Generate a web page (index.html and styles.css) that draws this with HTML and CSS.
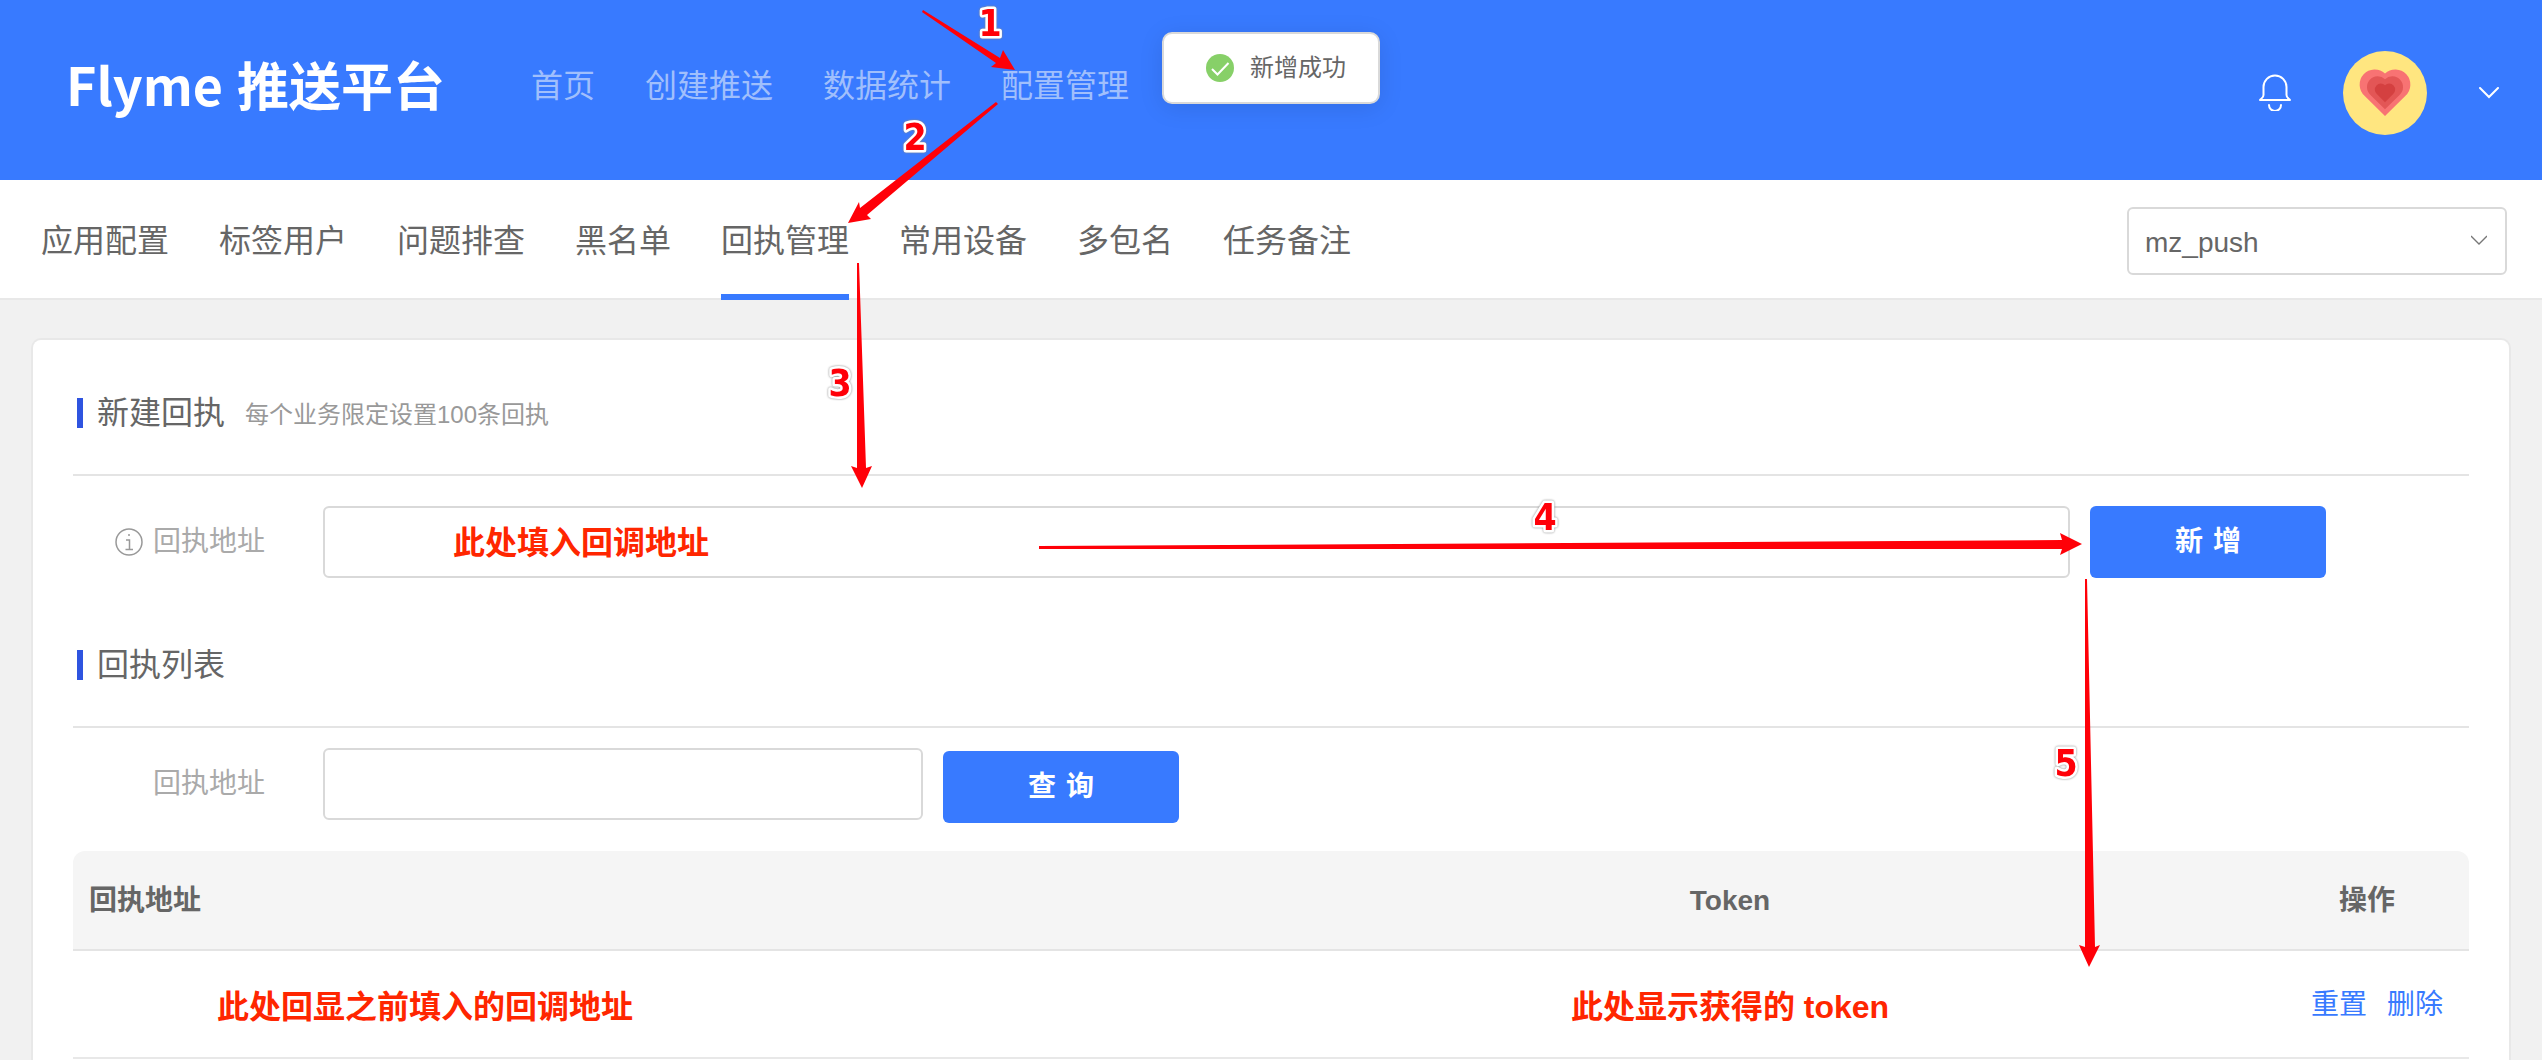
FILE: index.html
```html
<!DOCTYPE html>
<html lang="zh-CN">
<head>
<meta charset="utf-8">
<meta name="viewport" content="width=device-width, initial-scale=1">
<title>Flyme 推送平台</title>
<link rel="stylesheet" href="styles.css">
</head>
<body>
<header class="topbar">
  <a class="logo" href="#"><span>Flyme</span><span>推送平台</span></a>
  <nav class="main-nav">
    <a href="#">首页</a>
    <a href="#">创建推送</a>
    <a href="#">数据统计</a>
    <a href="#">配置管理</a>
  </nav>
  <div class="user-area">
    <button class="icon-button" type="button" aria-label="通知">
      <svg width="32" height="37" viewBox="0 0 32 37" fill="none" stroke="#fff" stroke-width="2" stroke-linecap="round" stroke-linejoin="round">
        <path d="M1 26H31C30 24.500 27.500 24 27.500 21V13A11.500 11.500 0 0 0 4.500 13V21C4.500 24 2 24.500 1 26Z"/>
        <path d="M10 31A6 6 0 0 0 22 31"/>
      </svg>
    </button>
    <button class="icon-button" type="button" aria-label="账号">
      <svg width="84" height="84" viewBox="0 0 84 84">
        <defs><path id="heart" d="M42 65 21.500 44.700A15 15 0 0 1 42 22.500 15 15 0 0 1 62.500 44.700Z"/></defs>
        <circle cx="42" cy="42" r="42" fill="#ffe680"/>
        <use href="#heart" fill="#f87373"/>
        <use href="#heart" fill="#e35656" transform="translate(42 42) scale(.71) translate(-42 -42)"/>
        <use href="#heart" fill="#d44040" transform="translate(42 42) scale(.4) translate(-42 -42)"/>
      </svg>
    </button>
    <button class="icon-button" type="button" aria-label="展开菜单">
      <svg width="20" height="12" viewBox="0 0 20 12" fill="none" stroke="#fff" stroke-width="2" stroke-linecap="round"><path d="M1 1 10 10 19 1"/></svg>
    </button>
  </div>
</header>

<div class="subbar">
  <nav class="tabs">
    <a href="#">应用配置</a>
    <a href="#">标签用户</a>
    <a href="#">问题排查</a>
    <a href="#">黑名单</a>
    <a class="active" href="#" aria-current="page">回执管理</a>
    <a href="#">常用设备</a>
    <a href="#">多包名</a>
    <a href="#">任务备注</a>
  </nav>
  <div class="app-select">
    <select aria-label="应用"><option>mz_push</option></select>
    <svg class="select-arrow" width="16" height="10" viewBox="0 0 16 10" fill="none" stroke="#777" stroke-width="1.300"><path d="M0 1 8 9 16 1"/></svg>
  </div>
</div>

<main class="page">
  <div class="card">
    <section>
      <div class="section-head"><h2>新建回执</h2><span class="hint">每个业务限定设置100条回执</span></div>
      <form class="form-row create-row">
        <label for="new-url">
          <svg width="28" height="28" viewBox="0 0 28 28" fill="none" stroke="#999" stroke-width="1.500"><circle cx="14" cy="14" r="13"/><path d="M11 12H14.500V21M10.500 21.500H18"/><circle cx="14" cy="7" r="1" fill="#999" stroke="none"/></svg>
          回执地址
        </label>
        <input class="url-input" id="new-url" type="text" value="此处填入回调地址">
        <button class="primary" type="button"><span>新</span><span>增</span></button>
      </form>
    </section>
    <section>
      <div class="section-head"><h2>回执列表</h2></div>
      <form class="form-row filter-row">
        <label for="filter-url">回执地址</label>
        <input class="filter-input" id="filter-url" type="text">
        <button class="primary" type="button"><span>查</span><span>询</span></button>
      </form>
      <table class="receipts">
        <colgroup><col><col class="col-token"><col class="col-actions"></colgroup>
        <thead><tr><th>回执地址</th><th>Token</th><th>操作</th></tr></thead>
        <tbody>
          <tr>
            <td class="note note-url">此处回显之前填入的回调地址</td>
            <td class="note">此处显示获得的 token</td>
            <td class="actions"><div><a href="#">重置</a><a href="#">删除</a></div></td>
          </tr>
        </tbody>
      </table>
    </section>
  </div>
</main>

<div class="toast" role="status">
  <svg width="28" height="28" viewBox="0 0 28 28"><circle cx="14" cy="14" r="14" fill="#87d068"/><path d="M6 15 11.500 20.500 22.500 9" fill="none" stroke="#fff" stroke-width="2"/></svg>
  <span>新增成功</span>
</div>

<svg class="guide" width="2110" height="980" viewBox="0 0 2110 980">
  <g class="guide-arrows">
    <path d="M923 10 1000 58 1003 50 1015 70 991 67 996 63 922 12Z"/>
    <path d="M996 102 860 208 859 202 848 223 871 219 867 215 998 104Z"/>
    <path d="M857 263H859L866 468 872 466 862 488 851 466 857 468Z"/>
    <path d="M1039 546 2062 540 2060 533 2082 544 2060 555 2062 549 1039 549Z"/>
    <path d="M2085 579H2087L2095 947 2100 945 2089 967 2079 945 2085 947Z"/>
  </g>
  <g class="guide-steps">
    <text x="990" y="36">1</text>
    <text x="915" y="150">2</text>
    <text x="840" y="396">3</text>
    <text x="1545" y="530">4</text>
    <text x="2066" y="776">5</text>
  </g>
</svg>
</body>
</html>
```
FILE: styles.css
```css
* {
  box-sizing: border-box;
}

body {
  margin: 0;
  position: relative;
  min-height: 100vh;
  display: flex;
  flex-direction: column;
  background: #f1f1f1;
  color: #666;
  font-family: "Liberation Sans", "Noto Sans CJK SC", sans-serif;
  font-size: 28px;
  line-height: 40px;
}

a {
  color: inherit;
  text-decoration: none;
}

button,
input,
select {
  font: inherit;
  color: inherit;
}

/* Top bar */
.topbar {
  height: 180px;
  flex: none;
  display: flex;
  align-items: center;
  padding: 0 43px 0 66px;
  background: #387aff;
}

.logo {
  width: 465px;
  display: flex;
  align-items: baseline;
  gap: 14px;
  padding-bottom: 12px;
  color: #fff;
  font-family: "Noto Sans CJK SC", sans-serif;
  font-size: 52px;
  font-weight: 700;
  line-height: 80px;
  white-space: nowrap;
}

.main-nav {
  display: flex;
  gap: 50px;
  padding-bottom: 8px;
  color: #a0bffc;
  font-size: 32px;
  line-height: 48px;
  white-space: nowrap;
}

.user-area {
  margin-left: auto;
  padding-top: 5px;
  display: flex;
  align-items: center;
  gap: 52px;
}

.icon-button {
  display: flex;
  padding: 0;
  border: 0;
  background: none;
}

/* Second-level tabs */
.subbar {
  height: 120px;
  flex: none;
  display: flex;
  align-items: stretch;
  justify-content: space-between;
  padding: 2px 35px 0 41px;
  background: #fff;
  box-shadow: inset 0 -2px #e8e8e8;
}

.tabs {
  display: flex;
  gap: 50px;
  font-size: 32px;
  line-height: 118px;
  white-space: nowrap;
}

.tabs .active {
  box-shadow: inset 0 -6px #387aff;
}

.app-select {
  position: relative;
  align-self: center;
  width: 380px;
}

.app-select select {
  display: block;
  width: 100%;
  height: 68px;
  padding: 4px 48px 0 16px;
  border: 2px solid #d9d9d9;
  border-radius: 6px;
  background: #fff;
  appearance: none;
}

.select-arrow {
  position: absolute;
  right: 20px;
  top: 28px;
  pointer-events: none;
}

/* Content card */
.page {
  flex: 1;
  display: flex;
  padding: 38px 31px 0;
}

.card {
  flex: 1;
  min-width: 0;
  padding: 0 40px;
  border: 2px solid #e8e8e8;
  border-bottom: 0;
  border-radius: 10px 10px 0 0;
  background: #fff;
}

.section-head {
  display: flex;
  align-items: center;
  gap: 20px;
  padding: 50px 4px 38px;
  border-bottom: 2px solid #e4e4e4;
  line-height: 46px;
}

.section-head h2 {
  display: flex;
  align-items: center;
  gap: 14px;
  margin: 0;
  font-size: 32px;
  font-weight: 400;
}

.section-head h2::before {
  content: "";
  width: 6px;
  height: 30px;
  background: #2f54e0;
}

.hint {
  padding-top: 4px;
  color: #999;
  font-size: 24px;
  line-height: 40px;
}

.form-row {
  display: flex;
  align-items: flex-start;
  gap: 20px;
}

.create-row {
  padding: 30px 143px 14px 0;
}

.filter-row {
  height: 123px;
  padding: 20px 0 28px;
}

.form-row label {
  width: 230px;
  padding-right: 38px;
  flex: none;
  display: flex;
  align-items: center;
  justify-content: flex-end;
  gap: 10px;
  color: #aaa;
  line-height: 72px;
}

.form-row input {
  height: 72px;
  border: 2px solid #d9d9d9;
  border-radius: 6px;
  background: #fff;
}

.form-row .url-input {
  flex: 1;
  min-width: 0;
  padding: 0 128px 4px;
}

.form-row .url-input,
.note {
  color: #ff2600;
  font-size: 32px;
  font-weight: 700;
}

.filter-input {
  width: 600px;
  padding: 0 16px;
}

.primary {
  width: 236px;
  height: 72px;
  display: flex;
  align-items: center;
  justify-content: center;
  gap: 10px;
  padding: 0;
  border: 0;
  border-radius: 6px;
  background: #387aff;
  color: #fff;
  font-weight: 700;
}

.filter-row .primary {
  align-self: flex-end;
}

/* Receipt table */
.receipts {
  width: 100%;
  table-layout: fixed;
  border-collapse: separate;
  border-spacing: 0;
  text-align: center;
}

.col-token {
  width: 1070px;
}

.col-actions {
  width: 204px;
}

.receipts th {
  height: 100px;
  padding: 2px 16px 0;
  border-bottom: 2px solid #e4e4e4;
  background: #f5f5f5;
}

.receipts th:first-child {
  border-top-left-radius: 12px;
  text-align: left;
}

.receipts th:last-child {
  border-top-right-radius: 12px;
}

.receipts td {
  height: 108px;
  padding: 6px 0 0;
  border-bottom: 2px solid #e8e8e8;
}

.receipts .note-url {
  padding-left: 144px;
  text-align: left;
}

.receipts .actions {
  padding: 2px 0 0 20px;
  color: #387aff;
}

.actions div {
  display: flex;
  justify-content: center;
  gap: 20px;
}

/* Success message */
.toast {
  position: absolute;
  top: 32px;
  left: 50%;
  transform: translateX(-50%);
  height: 72px;
  display: flex;
  align-items: center;
  gap: 16px;
  padding: 0 32px 0 42px;
  border: 2px solid #d9d9d9;
  border-radius: 10px;
  background: #fff;
  box-shadow: 0 4px 24px rgba(0, 0, 0, 0.1);
  font-size: 24px;
  white-space: nowrap;
}

/* Step-by-step guide drawn over the page */
.guide {
  position: absolute;
  top: 0;
  left: 0;
  pointer-events: none;
}

.guide-arrows {
  fill: #ff0008;
}

.guide-steps {
  fill: #ff0008;
  stroke: #fff;
  stroke-width: 5px;
  stroke-linejoin: round;
  paint-order: stroke;
  filter: drop-shadow(0 0 1px #888);
  font-family: "DejaVu Sans Condensed", "DejaVu Sans", sans-serif;
  font-size: 37px;
  font-weight: 700;
  text-anchor: middle;
}
```
